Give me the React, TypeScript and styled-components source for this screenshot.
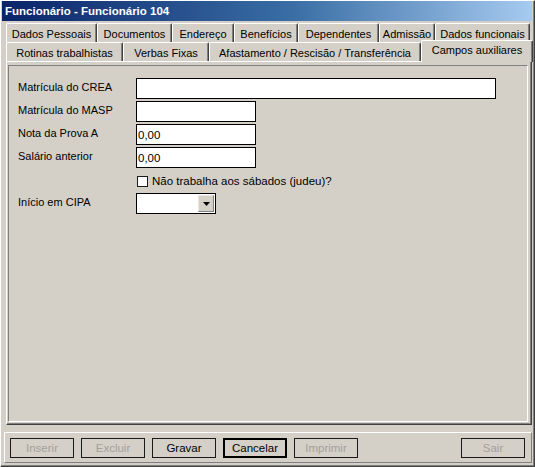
import React from "react";
import styled, { createGlobalStyle } from "styled-components";

const Global = createGlobalStyle`
  html, body { margin: 0; padding: 0; background: #D4D0C8; }
  * { box-sizing: border-box; }
`;

const FONT = `"Liberation Sans", Arial, sans-serif`;

const Window = styled.div`
  width: 535px;
  height: 467px;
  background: #d4d0c8;
  border-top: 1px solid #ffffff;
  border-left: 1px solid #ffffff;
  border-right: 1px solid #404040;
  border-bottom: 1px solid #404040;
  box-shadow: inset -1px -1px #808080;
  display: flex;
  flex-direction: column;
  padding: 0 2px 3px 1px;
  font-family: ${FONT};
  font-size: 11px;
  color: #000;
`;

const TitleBar = styled.div`
  height: 20px;
  flex: none;
  background: linear-gradient(to right, #0a246a 0%, #3a6ea5 55%, #a6caf0 100%);
  color: #fff;
  font-weight: bold;
  font-size: 11.5px;
  display: flex;
  align-items: center;
  padding-left: 3px;
`;

const TabControl = styled.div`
  flex: 1;
  display: flex;
  flex-direction: column;
  margin: 2px 0 0 4px;
`;

const TabRow = styled.div<{ $h: number }>`
  display: flex;
  height: ${(p) => p.$h}px;
  flex: none;
  position: relative;
  z-index: 1;
`;

const Tab = styled.div<{ $w: number; $active?: boolean }>`
  width: ${(p) => p.$w}px;
  flex: none;
  display: flex;
  align-items: center;
  justify-content: center;
  white-space: nowrap;
  background: #d4d0c8;
  border-top: 1px solid #ffffff;
  border-left: 1px solid #ffffff;
  border-right: 1px solid #404040;
  border-radius: 2px 2px 0 0;
  box-shadow: inset -1px 0 #808080;
  padding-top: 1px;
  ${(p) =>
    p.$active &&
    `
    margin-top: -2px;
    height: calc(100% + 3px);
    padding-top: 0;
    padding-bottom: 4px;
    position: relative;
    z-index: 2;
  `}
`;

const Page = styled.div`
  flex: 1;
  display: flex;
  border-top: 1px solid #ffffff;
  border-left: 1px solid #ffffff;
  border-right: 1px solid #404040;
  border-bottom: 1px solid #404040;
  box-shadow: inset -1px -1px #808080;
  padding: 3px 3px 2px 1px;
`;

const InnerBox = styled.div`
  flex: 1;
  border-top: 1px solid #808080;
  border-left: 1px solid #808080;
  border-right: 1px solid #ffffff;
  border-bottom: 1px solid #ffffff;
  padding: 12px 0 0 9px;
`;

const Form = styled.div`
  display: grid;
  grid-template-columns: 118px auto;
  grid-template-rows: 21px 21px 21px 21px 21px 21px;
  row-gap: 2px;
  justify-content: start;
`;

const Label = styled.div`
  align-self: start;
  padding-top: 2px;
  line-height: 14px;
  white-space: nowrap;
`;

const TextBox = styled.div<{ $w: number }>`
  width: ${(p) => p.$w}px;
  height: 21px;
  background: #fff;
  border: 1px solid #000;
  display: flex;
  align-items: center;
  padding-left: 1px;
  font-size: 11.5px;
`;

const CheckRow = styled.div`
  grid-column: 2;
  display: flex;
  align-items: center;
  gap: 4px;
  height: 16px;
  margin-top: 3px;
  margin-left: 1px;
  white-space: nowrap;
  font-size: 11.5px;
`;

const CheckBox = styled.div`
  width: 11px;
  height: 11px;
  background: #fff;
  border: 1px solid #1c1c1c;
  flex: none;
`;

const Combo = styled.div`
  width: 80px;
  height: 21px;
  background: #fff;
  border: 1px solid #000;
  display: flex;
  justify-content: flex-end;
  padding: 1px;
`;

const ComboButton = styled.div`
  width: 16px;
  height: 17px;
  background: #d4d0c8;
  border-top: 1px solid #e8e8e8;
  border-left: 1px solid #e8e8e8;
  border-right: 1px solid #808080;
  border-bottom: 1px solid #808080;
  display: flex;
  align-items: center;
  justify-content: center;
`;

const ButtonBar = styled.div`
  flex: none;
  height: 31px;
  margin: 7px 0 0 2px;
  border-top: 1px solid #ffffff;
  border-left: 1px solid #ffffff;
  border-right: 1px solid #808080;
  border-bottom: 1px solid #808080;
  display: flex;
  align-items: center;
  gap: 7px;
  padding: 0 6px 0 5px;
`;

const Button = styled.div<{ $disabled?: boolean; $default?: boolean; $push?: boolean }>`
  width: 64px;
  height: 20px;
  flex: none;
  display: flex;
  align-items: center;
  justify-content: center;
  border: ${(p) => (p.$default ? "2px solid #000" : "1px solid #1a1a1a")};
  color: ${(p) => (p.$disabled ? "#a4a09a" : "#000")};
  font-size: 11.5px;
  margin-left: ${(p) => (p.$push ? "auto" : "0")};
`;

const row1 = [
  ["Dados Pessoais", 91],
  ["Documentos", 75],
  ["Endereço", 62],
  ["Benefícios", 64],
  ["Dependentes", 81],
  ["Admissão", 56],
  ["Dados funcionais", 95],
] as const;

const row2 = [
  ["Rotinas trabalhistas", 117],
  ["Verbas Fixas", 86],
  ["Afastamento / Rescisão / Transferência", 212],
  ["Campos auxiliares", 112],
] as const;

export default function App() {
  return (
    <>
      <Global />
      <Window>
        <TitleBar>Funcionário - Funcionário 104</TitleBar>
        <TabControl>
          <TabRow $h={19}>
            {row1.map(([t, w]) => (
              <Tab key={t} $w={w}>
                {t}
              </Tab>
            ))}
          </TabRow>
          <TabRow $h={19}>
            {row2.map(([t, w], i) => (
              <Tab key={t} $w={w} $active={i === 3}>
                {t}
              </Tab>
            ))}
          </TabRow>
          <Page>
            <InnerBox>
              <Form>
                <Label>Matrícula do CREA</Label>
                <TextBox $w={360} />
                <Label>Matrícula do MASP</Label>
                <TextBox $w={120} />
                <Label>Nota da Prova A</Label>
                <TextBox $w={120}>0,00</TextBox>
                <Label>Salário anterior</Label>
                <TextBox $w={120}>0,00</TextBox>
                <CheckRow>
                  <CheckBox />
                  Não trabalha aos sábados (judeu)?
                </CheckRow>
                <Label>Início em CIPA</Label>
                <Combo>
                  <ComboButton>
                    <svg width="7" height="4" viewBox="0 0 7 4">
                      <path d="M0 0h7L3.5 4z" fill="#000" />
                    </svg>
                  </ComboButton>
                </Combo>
              </Form>
            </InnerBox>
          </Page>
        </TabControl>
        <ButtonBar>
          <Button $disabled>Inserir</Button>
          <Button $disabled>Excluir</Button>
          <Button>Gravar</Button>
          <Button $default>Cancelar</Button>
          <Button $disabled>Imprimir</Button>
          <Button $disabled $push>
            Sair
          </Button>
        </ButtonBar>
      </Window>
    </>
  );
}
